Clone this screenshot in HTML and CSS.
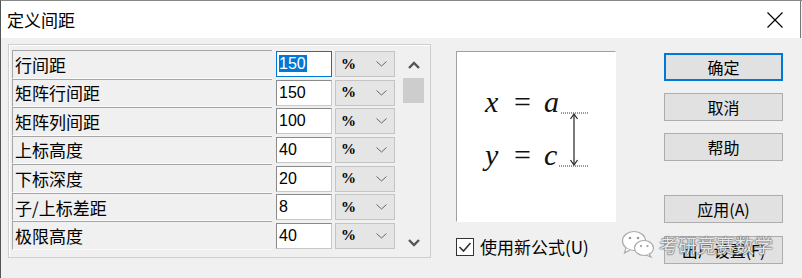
FILE: index.html
```html
<!DOCTYPE html>
<html lang="zh-CN">
<head>
    <meta charset="UTF-8">
    <title>定义间距</title>
    <link rel="stylesheet" href="styles.css">
</head>
<body>
    <div class="window">
        <div class="titlebar">
            <span class="title">定义间距</span>
            <svg class="close" width="16" height="16" viewBox="0 0 16 16">
                <path d="M0.5 0.5 L15.5 15.5 M15.5 0.5 L0.5 15.5" stroke="#000" stroke-width="1.2" fill="none"/>
            </svg>
        </div>

        <div class="content">
            <div class="listbox">
                <div class="rows">
                    <div class="row">
                        <div class="name">行间距</div>
                        <div class="field focus"><span class="sel">150</span></div>
                        <div class="unit">%<svg class="drop" width="11" height="6" viewBox="0 0 11 6"><path d="M0.5 0.5 L5.5 5 L10.5 0.5" stroke="#666" fill="none"/></svg></div>
                    </div>
                    <div class="row">
                        <div class="name">矩阵行间距</div>
                        <div class="field">150</div>
                        <div class="unit">%<svg class="drop" width="11" height="6" viewBox="0 0 11 6"><path d="M0.5 0.5 L5.5 5 L10.5 0.5" stroke="#666" fill="none"/></svg></div>
                    </div>
                    <div class="row">
                        <div class="name">矩阵列间距</div>
                        <div class="field">100</div>
                        <div class="unit">%<svg class="drop" width="11" height="6" viewBox="0 0 11 6"><path d="M0.5 0.5 L5.5 5 L10.5 0.5" stroke="#666" fill="none"/></svg></div>
                    </div>
                    <div class="row">
                        <div class="name">上标高度</div>
                        <div class="field">40</div>
                        <div class="unit">%<svg class="drop" width="11" height="6" viewBox="0 0 11 6"><path d="M0.5 0.5 L5.5 5 L10.5 0.5" stroke="#666" fill="none"/></svg></div>
                    </div>
                    <div class="row">
                        <div class="name">下标深度</div>
                        <div class="field">20</div>
                        <div class="unit">%<svg class="drop" width="11" height="6" viewBox="0 0 11 6"><path d="M0.5 0.5 L5.5 5 L10.5 0.5" stroke="#666" fill="none"/></svg></div>
                    </div>
                    <div class="row">
                        <div class="name">子/上标差距</div>
                        <div class="field">8</div>
                        <div class="unit">%<svg class="drop" width="11" height="6" viewBox="0 0 11 6"><path d="M0.5 0.5 L5.5 5 L10.5 0.5" stroke="#666" fill="none"/></svg></div>
                    </div>
                    <div class="row">
                        <div class="name">极限高度</div>
                        <div class="field">40</div>
                        <div class="unit">%<svg class="drop" width="11" height="6" viewBox="0 0 11 6"><path d="M0.5 0.5 L5.5 5 L10.5 0.5" stroke="#666" fill="none"/></svg></div>
                    </div>
                </div>
                <div class="scrollbar">
                    <div class="arrow">
                        <svg width="12" height="8" viewBox="0 0 12 8"><path d="M1 7 L6 2 L11 7" stroke="#555" stroke-width="2.4" fill="none"/></svg>
                    </div>
                    <div class="thumb"></div>
                    <div class="arrow bottom">
                        <svg width="12" height="8" viewBox="0 0 12 8"><path d="M1 1 L6 6 L11 1" stroke="#555" stroke-width="2.4" fill="none"/></svg>
                    </div>
                </div>
            </div>

            <div class="preview-col">
                <div class="preview">
                    <svg width="158" height="169" viewBox="0 0 158 169">
                        <g class="formula">
                            <text x="28" y="60">x</text>
                            <text x="57" y="60" class="op">=</text>
                            <text x="87" y="60">a</text>
                            <text x="28" y="113">y</text>
                            <text x="57" y="113" class="op">=</text>
                            <text x="87" y="113">c</text>
                        </g>
                        <path d="M104 61 H131 M102 114 H131" stroke="#333" stroke-width="1" stroke-dasharray="1 1" fill="none"/>
                        <path d="M117 63 V112" stroke="#222" stroke-width="1.2" fill="none"/>
                        <path d="M113.5 67 L117 62 L120.5 67 M113.5 108 L117 113 L120.5 108" stroke="#222" stroke-width="1.2" fill="none"/>
                    </svg>
                </div>
                <div class="check">
                    <span class="box">
                        <svg width="14" height="12" viewBox="0 0 14 12"><path d="M1.5 6 L5.5 10 L12.5 2" stroke="#333" stroke-width="1.6" fill="none"/></svg>
                    </span>
                    <span>使用新公式(U)</span>
                </div>
            </div>

            <div class="buttons">
                <div class="btn default">确定</div>
                <div class="btn">取消</div>
                <div class="btn">帮助</div>
                <div class="btn apply">应用(A)</div>
                <div class="btn">出厂设置(F)</div>
            </div>
        </div>

        <!-- watermark over the last button -->
        <div class="watermark">
            <svg width="34" height="28" viewBox="0 0 34 28">
                <ellipse cx="13" cy="11" rx="11.5" ry="9.5" fill="#fff" stroke="#aaa" stroke-width="1.2"/>
                <path d="M5 18 L3.5 23 L9 20" fill="#fff" stroke="#aaa" stroke-width="1.2"/>
                <circle cx="9" cy="8" r="1.3" fill="#999"/>
                <circle cx="17" cy="8" r="1.3" fill="#999"/>
                <ellipse cx="23" cy="18" rx="9.5" ry="7.5" fill="#fff" stroke="#aaa" stroke-width="1.2"/>
                <path d="M28 24 L30 27 L25 25" fill="#fff" stroke="#aaa" stroke-width="1.2"/>
                <circle cx="20" cy="16" r="1.1" fill="#999"/>
                <circle cx="26.5" cy="16" r="1.1" fill="#999"/>
            </svg>
            <span>考研竞赛数学</span>
        </div>
    </div>
</body>
</html>
```

FILE: styles.css
```css
* {
    box-sizing: border-box;
}
body {
    margin: 0;
    font-family: "Noto Sans CJK SC", "Liberation Sans", sans-serif;
    background: #f0f0f0;
    color: #000;
}
.window {
    position: relative;
    width: 802px;
    height: 278px;
    background: #f0f0f0;
    border-top: 1px solid #888;
    border-left: 1px solid #555;
    overflow: hidden;
}
.titlebar {
    height: 37px;
    background: #fff;
    display: flex;
    align-items: center;
    padding-left: 6px;
    border-right: 1px solid #777;
    margin-right: 1px;
}
.title {
    font-size: 17px;
}
.close {
    margin-left: auto;
    margin-right: 17px;
}
.content {
    display: flex;
    padding: 6px 0 0 7px;
}
.listbox {
    width: 423px;
    height: 214px;
    display: flex;
    border: 1px solid #cfcfcf;
    box-shadow: inset 1px 1px 0 #fff;
    padding: 5px 0 0 3px;
}
.rows {
    width: 385px;
    height: 200px;
    display: grid;
    grid-template-rows: repeat(7, 1fr);
}
.row {
    display: flex;
    align-items: center;
}
.name {
    width: 260px;
    height: 100%;
    display: flex;
    align-items: center;
    padding-left: 2px;
    font-size: 17px;
    border-top: 1px solid #a5a5a5;
    border-left: 1px solid #a5a5a5;
    border-bottom: 1px solid #fafafa;
}
.field {
    width: 56px;
    height: 26px;
    margin-left: 4px;
    background: #fff;
    border: 1px solid #8a8a8a;
    border-right-color: #c8c8c8;
    border-bottom-color: #c8c8c8;
    font-family: "Liberation Sans", sans-serif;
    font-size: 16px;
    line-height: 24px;
    padding-left: 2px;
}
.field.focus {
    border: 1px solid #0078d7;
}
.sel {
    background: #0078d7;
    color: #fff;
    padding-right: 1px;
}
.unit {
    width: 60px;
    height: 26px;
    margin-left: 3px;
    background: #e5e5e5;
    border: 1px solid #c4c4c4;
    display: flex;
    align-items: center;
    padding-left: 5px;
    font-family: "Liberation Serif", serif;
    font-weight: bold;
    font-size: 15px;
}
.drop {
    margin-left: auto;
    margin-right: 7px;
}
.scrollbar {
    width: 33px;
    display: flex;
    flex-direction: column;
    align-items: center;
    padding: 2px 0 2px 0;
}
.arrow {
    height: 25px;
    display: flex;
    align-items: center;
    justify-content: center;
}
.arrow.bottom {
    margin-top: auto;
}
.thumb {
    width: 21px;
    height: 25px;
    margin-top: 1px;
    background: #cdcdcd;
}
.preview-col {
    margin-left: 25px;
    padding-top: 7px;
}
.preview {
    width: 160px;
    height: 171px;
    background: #fff;
    border: 1px solid #fff;
    border-top-color: #a0a0a0;
    border-left-color: #a0a0a0;
}
.formula text {
    font-family: "Liberation Serif", serif;
    font-style: italic;
    font-size: 30px;
    fill: #111;
}
.formula text.op {
    font-style: normal;
}
.check {
    display: flex;
    align-items: center;
    margin-top: 12px;
    font-size: 17px;
}
.box {
    width: 18px;
    height: 18px;
    border: 1px solid #333;
    background: #fff;
    display: flex;
    align-items: center;
    justify-content: center;
    margin-right: 6px;
}
.buttons {
    margin-left: 48px;
    padding-top: 9px;
    display: flex;
    flex-direction: column;
    width: 119px;
}
.btn {
    height: 28px;
    background: #e1e1e1;
    border: 1px solid #adadad;
    display: flex;
    align-items: center;
    justify-content: center;
    font-size: 16px;
    margin-bottom: 12px;
}
.btn.default {
    border: 2px solid #0078d7;
}
.btn.apply {
    margin-top: 22px;
    margin-bottom: 13px;
}
.watermark {
    position: absolute;
    left: 620px;
    top: 229px;
    display: flex;
    align-items: center;
}
.watermark span {
    margin-left: 4px;
    font-size: 19px;
    color: #e6e6e6;
    text-shadow: 0 0 1px #555, 0 0 1px #555, 0 0 2px #888;
}
```
